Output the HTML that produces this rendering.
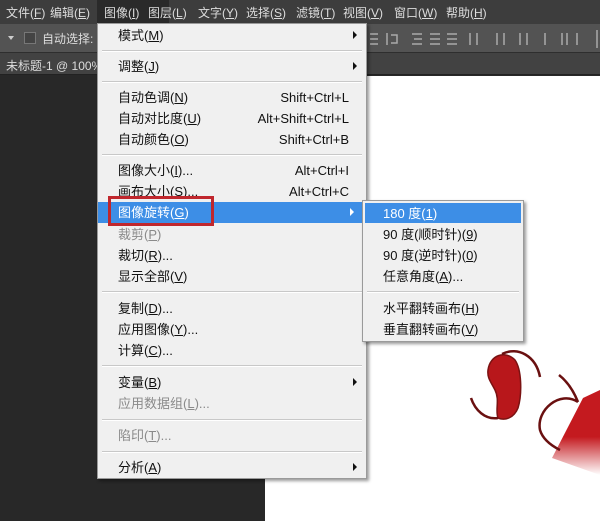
<!DOCTYPE html>
<html><head><meta charset="utf-8"><style>
*{margin:0;padding:0;box-sizing:border-box}
body{width:600px;height:521px;overflow:hidden;background:#282828;position:relative;font-family:"Liberation Sans","Noto Sans CJK SC",sans-serif}
.a{position:absolute}
.mb{left:0;top:0;width:600px;height:24px;background:#3d3d3d;color:#ddd;font-size:12px}
.mb span{position:absolute;top:4px}
.tb{left:0;top:24px;width:600px;height:29px;background:#535353;border-bottom:1px solid #2e2e2e}
.tab{left:0;top:53px;width:600px;height:22px;background:#424242;border-bottom:1px solid #222}
.cv{left:265px;top:76px;width:335px;height:445px;background:#fff}
.menu{left:97px;top:23px;width:270px;height:456px;background:#f0f0f0;border:1px solid #9a9a9a;box-shadow:2px 2px 3px rgba(0,0,0,.4);font-size:13px;color:#111}
.it{position:absolute;left:20px;height:21px;line-height:21px;white-space:nowrap}
.sc{position:absolute;right:17px;height:21px;line-height:21px}
.dis{color:#8a8a8a}
.sep{position:absolute;left:4px;right:4px;height:2px;border-top:1px solid #c8c8c8;border-bottom:1px solid #fff}
.arr{position:absolute;right:9px;width:0;height:0;border-left:4px solid #111;border-top:4px solid transparent;border-bottom:4px solid transparent}
u{text-decoration:underline}
.sub{left:362px;top:200px;width:162px;height:142px;background:#f0f0f0;border:1px solid #9a9a9a;box-shadow:2px 2px 3px rgba(0,0,0,.4);font-size:13px;color:#111}
</style></head><body>
<div class="a mb">
<span style="left:6px">文件(<u>F</u>)</span><span style="left:50px">编辑(<u>E</u>)</span>
<span style="left:97px;top:0;height:24px;width:72px;background:#2a2a2a"></span>
<span style="left:104px">图像(<u>I</u>)</span><span style="left:148px">图层(<u>L</u>)</span>
<span style="left:198px">文字(<u>Y</u>)</span><span style="left:246px">选择(<u>S</u>)</span><span style="left:296px">滤镜(<u>T</u>)</span><span style="left:343px">视图(<u>V</u>)</span><span style="left:394px">窗口(<u>W</u>)</span><span style="left:446px">帮助(<u>H</u>)</span>
</div>
<div class="a tb">
<div class="a" style="left:8px;top:12px;border-top:4px solid #ccc;border-left:3px solid transparent;border-right:3px solid transparent"></div>
<div class="a" style="left:24px;top:8px;width:12px;height:12px;background:#444;border:1px solid #777"></div>
<div class="a" style="left:42px;top:6px;color:#ddd;font-size:12px">自动选择:</div>
<svg class="a" style="left:367px;top:6px" width="233" height="18" stroke="#aaa" stroke-width="1.5" fill="none">
<path d="M3 4h8M3 9h8M3 14h8M20 3v12M24 5h6v8h-6M45 4h10M47 9h8M45 14h10M63 4h10M63 9h10M63 14h10M80 4h10M80 9h10M80 14h10M103 3v12M110 3v12M130 3v12M137 3v12M153 3v12M160 3v12M178 3v12M195 3v12M200 3v12M210 3v12M230 0v18"/></svg>
</div>
<div class="a tab"><div class="a" style="left:6px;top:4px;color:#ddd;font-size:12px">未标题-1 @ 100%</div></div>
<div class="a cv"></div>
<svg class="a" style="left:460px;top:340px" width="140" height="140">
<defs><linearGradient id="g" x1="0" y1="0" x2="0" y2="1"><stop offset="0.55" stop-color="#c41a1f"/><stop offset="1" stop-color="#fff"/></linearGradient></defs>
<path d="M123 58 L140 50 L140 135 L92 118 Z" fill="url(#g)"/>
<path d="M28 30 C30 15 45 10 55 20 C62 30 62 55 58 68 C54 78 45 81 38 78 C35 70 40 60 35 50 C31 42 27 38 28 30Z" fill="#b8171b" stroke="#7a1212" stroke-width="1.5"/>
<path d="M42 14 C58 6 76 16 80 37 M38 78 C25 80 15 70 11 58" fill="none" stroke="#6a1010" stroke-width="2.5"/>
<path d="M99 35 C108 42 114 52 118 62 M118 62 C100 50 76 70 80 90 C83 100 92 106 100 110" fill="none" stroke="#6a1010" stroke-width="2.5"/>
</svg>
<div class="a menu">
<div class="it" style="top:1px">模式(<u>M</u>)</div><div class="arr" style="top:7px"></div>
<div class="sep" style="top:26px"></div>
<div class="it" style="top:32px">调整(<u>J</u>)</div><div class="arr" style="top:38px"></div>
<div class="sep" style="top:57px"></div>
<div class="it" style="top:63px">自动色调(<u>N</u>)</div><div class="sc" style="top:63px">Shift+Ctrl+L</div>
<div class="it" style="top:84px">自动对比度(<u>U</u>)</div><div class="sc" style="top:84px">Alt+Shift+Ctrl+L</div>
<div class="it" style="top:105px">自动颜色(<u>O</u>)</div><div class="sc" style="top:105px">Shift+Ctrl+B</div>
<div class="sep" style="top:130px"></div>
<div class="it" style="top:136px">图像大小(<u>I</u>)...</div><div class="sc" style="top:136px">Alt+Ctrl+I</div>
<div class="it" style="top:157px">画布大小(<u>S</u>)...</div><div class="sc" style="top:157px">Alt+Ctrl+C</div>
<div class="a" style="left:0;top:178px;width:265px;height:21px;background:#3d8ee6"></div>
<div class="it" style="top:178px;color:#fff">图像旋转(<u>G</u>)</div><div class="arr" style="top:184px;border-left-color:#fff;right:12px"></div>
<div class="a" style="left:10px;top:172px;width:106px;height:30px;border:3px solid #c0272d"></div>
<div class="it dis" style="top:200px">裁剪(<u>P</u>)</div>
<div class="it" style="top:221px">裁切(<u>R</u>)...</div>
<div class="it" style="top:242px">显示全部(<u>V</u>)</div>
<div class="sep" style="top:267px"></div>
<div class="it" style="top:274px">复制(<u>D</u>)...</div>
<div class="it" style="top:295px">应用图像(<u>Y</u>)...</div>
<div class="it" style="top:316px">计算(<u>C</u>)...</div>
<div class="sep" style="top:341px"></div>
<div class="it" style="top:348px">变量(<u>B</u>)</div><div class="arr" style="top:354px"></div>
<div class="it dis" style="top:369px">应用数据组(<u>L</u>)...</div>
<div class="sep" style="top:395px"></div>
<div class="it dis" style="top:401px">陷印(<u>T</u>)...</div>
<div class="sep" style="top:427px"></div>
<div class="it" style="top:433px">分析(<u>A</u>)</div><div class="arr" style="top:439px"></div>
</div>
<div class="a sub">
<div class="a" style="left:2px;top:2px;width:156px;height:20px;background:#3d8ee6"></div>
<div class="it" style="top:2px;color:#fff">180 度(<u>1</u>)</div>
<div class="it" style="top:23px">90 度(顺时针)(<u>9</u>)</div>
<div class="it" style="top:44px">90 度(逆时针)(<u>0</u>)</div>
<div class="it" style="top:65px">任意角度(<u>A</u>)...</div>
<div class="sep" style="top:90px"></div>
<div class="it" style="top:97px">水平翻转画布(<u>H</u>)</div>
<div class="it" style="top:118px">垂直翻转画布(<u>V</u>)</div>
</div>
</body></html>
